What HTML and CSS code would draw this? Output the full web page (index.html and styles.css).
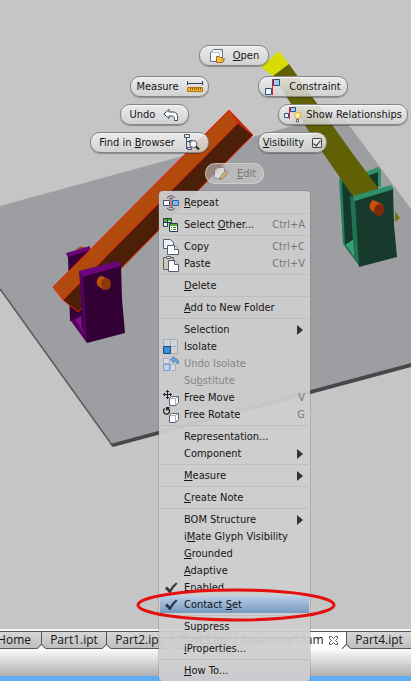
FILE: index.html
```html
<!DOCTYPE html>
<html lang="en">
<head>
<meta charset="utf-8">
<meta name="viewport" content="width=device-width, initial-scale=1">
<title>Assembly1.iam</title>
<link rel="stylesheet" href="styles.css">
</head>
<body>
<div class="app">
  <main class="viewport">
    <svg class="scene" width="411" height="681" viewBox="0 0 411 681" aria-hidden="true">
      <!-- base plate -->
      <path fill="#9d9ea1" d="M0 206 340 113 411 209V364L112 444 0 289z"/>
      <path fill="none" stroke="#59595b" stroke-width="1.500" d="M0 289 112 445"/>
      <path fill="#47484b" d="M110 444 411 363V367L113 447z"/>
      <!-- yellow arm and green bracket -->
      <g>
        <path fill="#2f906a" d="M363 173 378 167 381 170V187H378V172L363 177z"/>
        <path fill="#14382b" d="M364 177 378 172V190H364z"/>
        <path fill="#23805a" d="M339 178 343 181 346 246 343 244z"/>
        <path fill="#14382b" d="M342 181 353 190 355 240 345 245z"/>
        <path fill="#38a077" d="M345 245 354 239 357 258z"/>
        <path fill="#207353" d="M350 195 356 201 360 267 343 244 347 246 354 256z"/>
        <path fill="#d9db05" d="M261 67 279 51 289 64 273 76z"/>
        <path fill="#5f6104" d="M273 76 289 64 350 150 379 189 354 198 323 153z"/>
        <path fill="#77760a" d="M395 211 400 218 395 222z"/>
        <path fill="#173a2c" d="M355 200 393 188 394 225 397 257 359 267z"/>
        <path fill="#2f906a" d="M353 196 391 185 394 189 355 201z"/>
        <path fill="#c9500f" d="M373.500 200A5 6 20 0 0 371 210L377 215 383.500 205z"/>
        <ellipse cx="379" cy="210" rx="5" ry="6" fill="#80290a" transform="rotate(20 379 210)"/>
      </g>
      <!-- purple bracket, rear half -->
      <g>
        <path fill="#a8500b" d="M76 250Q80 244 86 248V253H76z"/>
        <path fill="#6a0577" d="M66 253 90 246V253L68 258z"/>
        <path fill="#360039" d="M68 257 90 250 86 324 70 321z"/>
        <path fill="#7d0c89" d="M72 321 83 315 87 340z"/>
      </g>
      <!-- orange arm -->
      <path fill="#b14a0c" d="M229 110 238 123 63 300 53 287z"/>
      <path fill="#4c2008" d="M238 123 253 135 78 312 63 300z"/>
      <path fill="#983a0b" d="M229 110 253 135 238 123z"/>
      <path fill="none" stroke="#f51b0b" d="M229 110 253 135 78 312 63 300 53 287zM229 110 238 123 63 300M238 123 253 135"/>
      <!-- purple bracket, front half -->
      <g>
        <path fill="#330036" d="M80 274 121 265 122 299 125 333 87 343 82 326z"/>
        <path fill="#6c0579" d="M79 271 118 261 121 266 82 277z"/>
        <path fill="#550060" d="M79 271 83 277 87 343 71 321 74 318 84 334z"/>
        <path fill="#bb500b" d="M102 276A5 6 0 0 0 98 286L104 290 110 280z"/>
        <ellipse cx="106" cy="284" rx="5" ry="6" fill="#8c3a08"/>
      </g>
    </svg>
  </main>

  <nav class="tabs" aria-label="Open documents">
    <button class="tab home">Home</button>
    <button class="tab">Part1.ipt</button>
    <button class="tab">Part2.ipt</button>
    <button class="tab">Part3.ipt</button>
    <button class="tab active">Assembly1.iam
      <svg width="9" height="9" viewBox="0 0 9 9" fill="#fff" stroke="#555"><path d="M.5.5h2l2 2 2-2h2v2l-2 2 2 2v2h-2l-2-2-2 2h-2v-2l2-2-2-2z"/></svg>
    </button>
    <button class="tab">Part4.ipt</button>
  </nav>
  <footer class="status"></footer>
</div>

<div class="marking" aria-label="Marking menu">
  <button class="pill open">
    <svg width="16" height="16" viewBox="0 0 16 16"><path fill="#f8f9fb" stroke="#65748b" d="M1.500 4.500 4.500 1.500H13.500V10.500L10.500 13.500H1.500z"/><path fill="none" stroke="#b9c5d5" d="M2 4.500H10.500V13M10.500 4.500 13 2"/><path fill="#f1bd45" stroke="#a66a0b" d="M7.500 14.500V8.500H10L11 9.500H13.500V11H15.500L13.500 14.500z"/></svg>
    <span><u>O</u>pen</span>
  </button>
  <button class="pill measure"><span>Measure</span>
    <svg width="16" height="12" viewBox="0 0 16 12"><path fill="none" stroke="#374254" d="M.5 0V4M15.500 0V4M1 2.500H15"/><path fill="#f5b72c" stroke="#ad7411" d="M.5 6.500h15v4H.5z"/><path stroke="#8f5a09" d="M3.500 7v2M5.500 7v2M7.500 7v2M9.500 7v2M11.500 7v2M13.500 7v2"/></svg>
  </button>
  <button class="pill undo"><span>Undo</span>
    <svg width="16" height="14" viewBox="0 0 16 14"><path fill="#fff" stroke="#344459" d="M.8 6 6 1.500V4H10C14 4 15 7 14.500 12.500H11.500C11.800 9 11 8 9 8H6V10.500z"/></svg>
  </button>
  <button class="pill find"><span>Find in <u>B</u>rowser</span>
    <svg width="17" height="17" viewBox="0 0 17 17"><path fill="#e4edf7" stroke="#44546a" d="M1.500.5h5v3h-5zM6.500 6.500h4v2h-4zM4.500 13.500h4v2h-4zM3.500 4v11M4 7.500h2"/><circle cx="10.500" cy="10" r="3.500" fill="#f5f9ff" stroke="#526077"/><path stroke="#222" stroke-width="2" d="m13 12.500 3 3"/></svg>
  </button>
  <button class="pill constraint">
    <svg width="16" height="16" viewBox="0 0 16 16"><path fill="#a7c9ec" stroke="#294e80" d="M8.500.5h6v6h-6z"/><path fill="#f7f9fc" stroke="#294e80" d="M.5 9.500h6v6h-6z"/><path stroke="#ed1721" d="M7.500 0v16"/></svg>
    <span>Constraint</span>
  </button>
  <button class="pill relations">
    <svg width="18" height="17" viewBox="0 0 18 17"><path fill="#a7c9ec" stroke="#294e80" d="M6.500 1.500h5v4h-5z"/><path fill="#f7f9fc" stroke="#294e80" d="M.5 7.500h4v4h-4z"/><path stroke="#ed1721" d="M5.500 1v12"/><circle cx="13.500" cy="9.500" r="3" fill="#fff1a8" stroke="#f19d13"/><path stroke="#efa43e" d="M13.500 4v1M9 6l1 1M18 6l-1 1"/><path fill="#ddd" stroke="#667" d="M12.500 13h2v3h-2z"/></svg>
    <span>Show Relationships</span>
  </button>
  <label class="pill visibility"><span><u>V</u>isibility</span><input type="checkbox" checked></label>
  <button class="pill edit" disabled>
    <svg width="16" height="15" viewBox="0 0 16 15"><path fill="#eee" stroke="#747c89" d="M1.500 4.500 4.500 1.500h7v9l-2 2h-8z"/><path fill="#e8b64d" stroke="#765326" d="m6.500 13.500 1-3 5.500-6 2 2-5.500 6z"/></svg>
    <span><u>E</u>dit</span>
  </button>
</div>

<div class="menu" role="menu">
  <button role="menuitem"><i><svg width="16" height="16" viewBox="0 0 16 16"><path fill="#f8fafc" stroke="#3e526c" d="M.5 5.500h6v5h-6z"/><path fill="#79b9ee" stroke="#2d669e" d="M9.500 5.500h6v5h-6z"/><path stroke="#e5202a" d="M8 4v8"/><path fill="none" stroke="#44546a" d="M4 3Q8-1.500 12 3M6 4Q8 2 10 4M4 13Q8 17.500 12 13M6 12Q8 14 10 12"/></svg></i><span><u>R</u>epeat</span></button>
  <hr>
  <button role="menuitem"><i><svg width="16" height="16" viewBox="0 0 16 16"><path fill="#eef3f5" stroke="#26394f" d="M.5 1.500h4v4h-4zM4.500 1.500h4v4h-4zM.5 5.500h4v4h-4z"/><path fill="#4db032" d="M1 2h3v3H1zM5 2h3v2H5z"/><path fill="#fff" stroke="#26394f" d="M6.500 6.500h8v8h-8z"/><path fill="#4db032" d="M7 7h7v2H7z"/><path stroke="#398b26" d="M8 10.500h1M10 10.500h3M8 12.500h1M10 12.500h3"/></svg></i><span>Select <u>O</u>ther...</span><kbd>Ctrl+A</kbd></button>
  <hr>
  <button role="menuitem"><i><svg width="16" height="16" viewBox="0 0 16 16"><path fill="#eef1f5" stroke="#526077" d="M.5.5h7l3 3v6H.5z"/><path fill="#fff" stroke="#526077" d="M4.500 6.500h7l4 4v5h-11z"/><path fill="#d6dfe9" stroke="#526077" d="M11.500 6.500v4h4"/></svg></i><span>Copy</span><kbd>Ctrl+C</kbd></button>
  <button role="menuitem"><i><svg width="16" height="16" viewBox="0 0 16 16"><path fill="#d0c9b8" stroke="#65625b" d="M.5 1.500h10v12H.5z"/><path fill="#eee" stroke="#666" d="M3.500.5h4v2h-4z"/><path fill="#fff" stroke="#526077" d="M5.500 4.500h6l4 4v7h-10z"/><path fill="#d6dfe9" stroke="#526077" d="M11.500 4.500v4h4"/></svg></i><span>Paste</span><kbd>Ctrl+V</kbd></button>
  <hr>
  <button role="menuitem"><i></i><span><u>D</u>elete</span></button>
  <hr>
  <button role="menuitem"><i></i><span><u>A</u>dd to New Folder</span></button>
  <hr>
  <button role="menuitem"><i></i><span>Selection</span><b class="more"></b></button>
  <button role="menuitem"><i><svg width="16" height="16" viewBox="0 0 16 16"><path fill="#d2d5d8" stroke="#a5adb7" d="M.5.5h7v7h-7zM7.500.5h7v7h-7zM7.500 7.500h7v7h-7z"/><path fill="#3c91d5" stroke="#174c80" d="M.5 7.500h7v7h-7z"/></svg></i><span>Isolate</span></button>
  <button role="menuitem" disabled><i><svg width="16" height="16" viewBox="0 0 16 16"><path fill="#d8dce2" stroke="#a2afc2" d="M.5 2.500h6v5h-6zM7.500 8.500h5v6h-5z"/><path fill="#bdd5ef" stroke="#7d9fc8" d="M.5 8.500h6v6h-6z"/><path fill="#6ea9df" stroke="#5789ba" d="M7.500 3.500 11 .5v2h2q3 1 2.500 5H14q0-3-3-3V7z"/></svg></i><span>Undo Isolate</span></button>
  <button role="menuitem" disabled><i></i><span>Su<u>b</u>stitute</span></button>
  <button role="menuitem"><i><svg width="16" height="16" viewBox="0 0 16 16"><path fill="none" stroke="#222" d="M4.500 0v9M0 4.500h9M3 2l1.500-1.500L6 2M3 7l1.500 1.500L6 7M2 3 .5 4.500 2 6M7 3l1.500 1.500L7 6"/><path fill="#fff" stroke="#526077" d="M6.500 8.500l2-2h7v6l-3 3h-6z"/><path fill="none" stroke="#a4b1c1" d="M7 8.500h5.500V15M12.500 8.500 15 7"/></svg></i><span>Free Move</span><kbd>V</kbd></button>
  <button role="menuitem"><i><svg width="16" height="16" viewBox="0 0 16 16"><path fill="none" stroke="#222" stroke-width="1.300" d="M2 1.500A3 3 0 1 0 6.500 4Q6.500 2 4 1.500M6.500 .7H3.700V3.500"/><path fill="#fff" stroke="#526077" d="M6.500 8.500l2-2h7v6l-3 3h-6z"/><path fill="none" stroke="#a4b1c1" d="M7 8.500h5.500V15M12.500 8.500 15 7"/></svg></i><span>Free Rotate</span><kbd>G</kbd></button>
  <hr>
  <button role="menuitem"><i></i><span>Representation...</span></button>
  <button role="menuitem"><i></i><span>Component</span><b class="more"></b></button>
  <hr>
  <button role="menuitem"><i></i><span><u>M</u>easure</span><b class="more"></b></button>
  <hr>
  <button role="menuitem"><i></i><span><u>C</u>reate Note</span></button>
  <hr>
  <button role="menuitem"><i></i><span>BOM Structure</span><b class="more"></b></button>
  <button role="menuitem"><i></i><span>i<u>M</u>ate Glyph Visibility</span></button>
  <button role="menuitem"><i></i><span><u>G</u>rounded</span></button>
  <button role="menuitem"><i></i><span><u>A</u>daptive</span></button>
  <button role="menuitemcheckbox" aria-checked="true"><i><svg width="16" height="16" viewBox="0 0 16 16"><path fill="#343638" d="M2 8.500 4 6.500 7 9.500Q9 5.500 13 2.500L14.500 3.500Q10 8 7.500 13H6.500z"/></svg></i><span><u>E</u>nabled</span></button>
  <button class="selected" role="menuitemcheckbox" aria-checked="true"><i><svg width="16" height="16" viewBox="0 0 16 16"><path fill="#29384a" d="M2 8.500 4 6.500 7 9.500Q9 5.500 13 2.500L14.500 3.500Q10 8 7.500 13H6.500z"/></svg></i><span>Contact <u>S</u>et</span></button>
  <hr>
  <button role="menuitem"><i></i><span>Suppress</span></button>
  <hr>
  <button role="menuitem"><i></i><span><u>i</u>Properties...</span></button>
  <hr>
  <button role="menuitem"><i></i><span><u>H</u>ow To...</span></button>
</div>

<svg class="callout" width="202" height="36" viewBox="0 0 202 36" aria-hidden="true"><ellipse cx="101" cy="18" rx="98" ry="15" fill="none" stroke="#e3100f" stroke-width="3"/></svg>
</body>
</html>
```
FILE: styles.css
```css
* { box-sizing: border-box; }

body {
  margin: 0;
  position: relative;
  min-height: 100vh;
  overflow: hidden;
  font: 11px/17px "DejaVu Sans Condensed", "DejaVu Sans", sans-serif;
  font-stretch: condensed;
  color: #151515;
}

button {
  margin: 0;
  border: 0;
  padding: 0;
  background: none;
  color: inherit;
  font: inherit;
  white-space: nowrap;
}

svg { display: block; flex: none; }
u { text-underline-offset: 1px; }

/* Window frame */
.app {
  isolation: isolate;
  display: flex;
  flex-direction: column;
  min-height: 100vh;
}
.viewport {
  flex: 1;
  position: relative;
  overflow: hidden;
  background: #c5c5c5;
}
.scene { position: absolute; top: 0; left: 0; }

.tabs {
  display: flex;
  height: 22px;
  border-top: 2px solid #f4f4f4;
  border-bottom: 2px solid #fafafa;
  background: #ccc;
  font: 12px/16px "Open Sans", "Noto Sans", sans-serif;
  overflow: hidden;
}
.tab {
  position: relative;
  flex: none;
  width: 65px;
  border: solid #555;
  border-width: 1px 1px 1px 0;
  background: linear-gradient(#d6d6d6, #bebebe);
}
/* Notch where two tabs meet */
.tab:not(:last-child)::after {
  content: "";
  position: absolute;
  z-index: 1;
  right: -4px;
  bottom: -4px;
  width: 6px;
  height: 6px;
  border: solid #555;
  border-width: 1px 0 0 1px;
  background: #fafafa;
  transform: rotate(45deg);
}
.tab.home { width: 42px; padding-right: 10px; direction: rtl; }
.tab.active {
  display: flex;
  align-items: center;
  justify-content: center;
  gap: 5px;
  width: 110px;
  padding-right: 6px;
  background: #fff;
  border-bottom-color: #fff;
}
.status {
  height: 30px;
  border-bottom: 5px solid #60adf5;
  background: linear-gradient(#f5f5f5, #b0b0b0);
}

/* Radial shortcuts floating over the model */
.marking { position: absolute; top: 0; left: 0; }
.pill {
  position: absolute;
  display: flex;
  align-items: center;
  justify-content: center;
  gap: 8px;
  height: 21px;
  border: 1px solid #858585;
  border-radius: 10px;
  background: linear-gradient(rgba(240, 240, 240, .88), rgba(212, 212, 212, .84));
  box-shadow: 0 1px 1px rgba(0, 0, 0, .3), inset 0 1px 0 rgba(250, 250, 250, .8);
  white-space: nowrap;
}
.open { top: 45px; left: 199px; width: 70px; }
.measure { top: 76px; left: 130px; width: 79px; }
.undo { top: 104px; left: 120px; width: 69px; }
.find { top: 132px; left: 90px; width: 119px; }
.constraint { top: 76px; left: 258px; width: 90px; }
.relations { top: 104px; left: 278px; width: 130px; gap: 4px; }
.visibility { top: 132px; left: 258px; width: 69px; }
.edit {
  top: 163px;
  left: 205px;
  width: 59px;
  border-color: rgba(220, 220, 220, .6);
  background: rgba(205, 205, 205, .6);
  box-shadow: none;
  color: #777;
}
.edit svg { opacity: .6; }

.pill input {
  appearance: none;
  display: grid;
  place-items: center;
  width: 10px;
  height: 10px;
  margin: 0;
  border: 1px solid #444;
  border-radius: 1px;
  background: #e6e6e6;
}
.pill input:checked::after {
  content: "";
  width: 3px;
  height: 6px;
  border: solid #222;
  border-width: 0 1px 1px 0;
  transform: rotate(40deg);
}

/* Context menu */
.menu {
  position: absolute;
  top: 191px;
  left: 159px;
  width: 151px;
  padding: 3px 1px 2px;
  border-radius: 4px;
  background: rgba(206, 206, 206, .94);
  box-shadow: 0 0 0 1px rgba(110, 110, 110, .25);
}
.menu button {
  display: flex;
  align-items: center;
  width: 100%;
  height: 17px;
  text-align: left;
}
.menu button:disabled { color: #858585; }
.menu i { flex: none; width: 16px; margin: 0 5px 0 3px; }
.menu span { flex: 1; }
.menu kbd { padding-right: 4px; font: inherit; color: #777; }
.menu hr {
  height: 1px;
  margin: 2px 0;
  border: 0;
  background: #bebebe;
}
.menu .selected { background: linear-gradient(#b9cfe6, #7698bf); }
.more {
  width: 0;
  margin-right: 6px;
  border: solid transparent;
  border-width: 5px 0 5px 6px;
  border-left-color: #333;
}

.callout { position: absolute; top: 587px; left: 135px; pointer-events: none; }
```
